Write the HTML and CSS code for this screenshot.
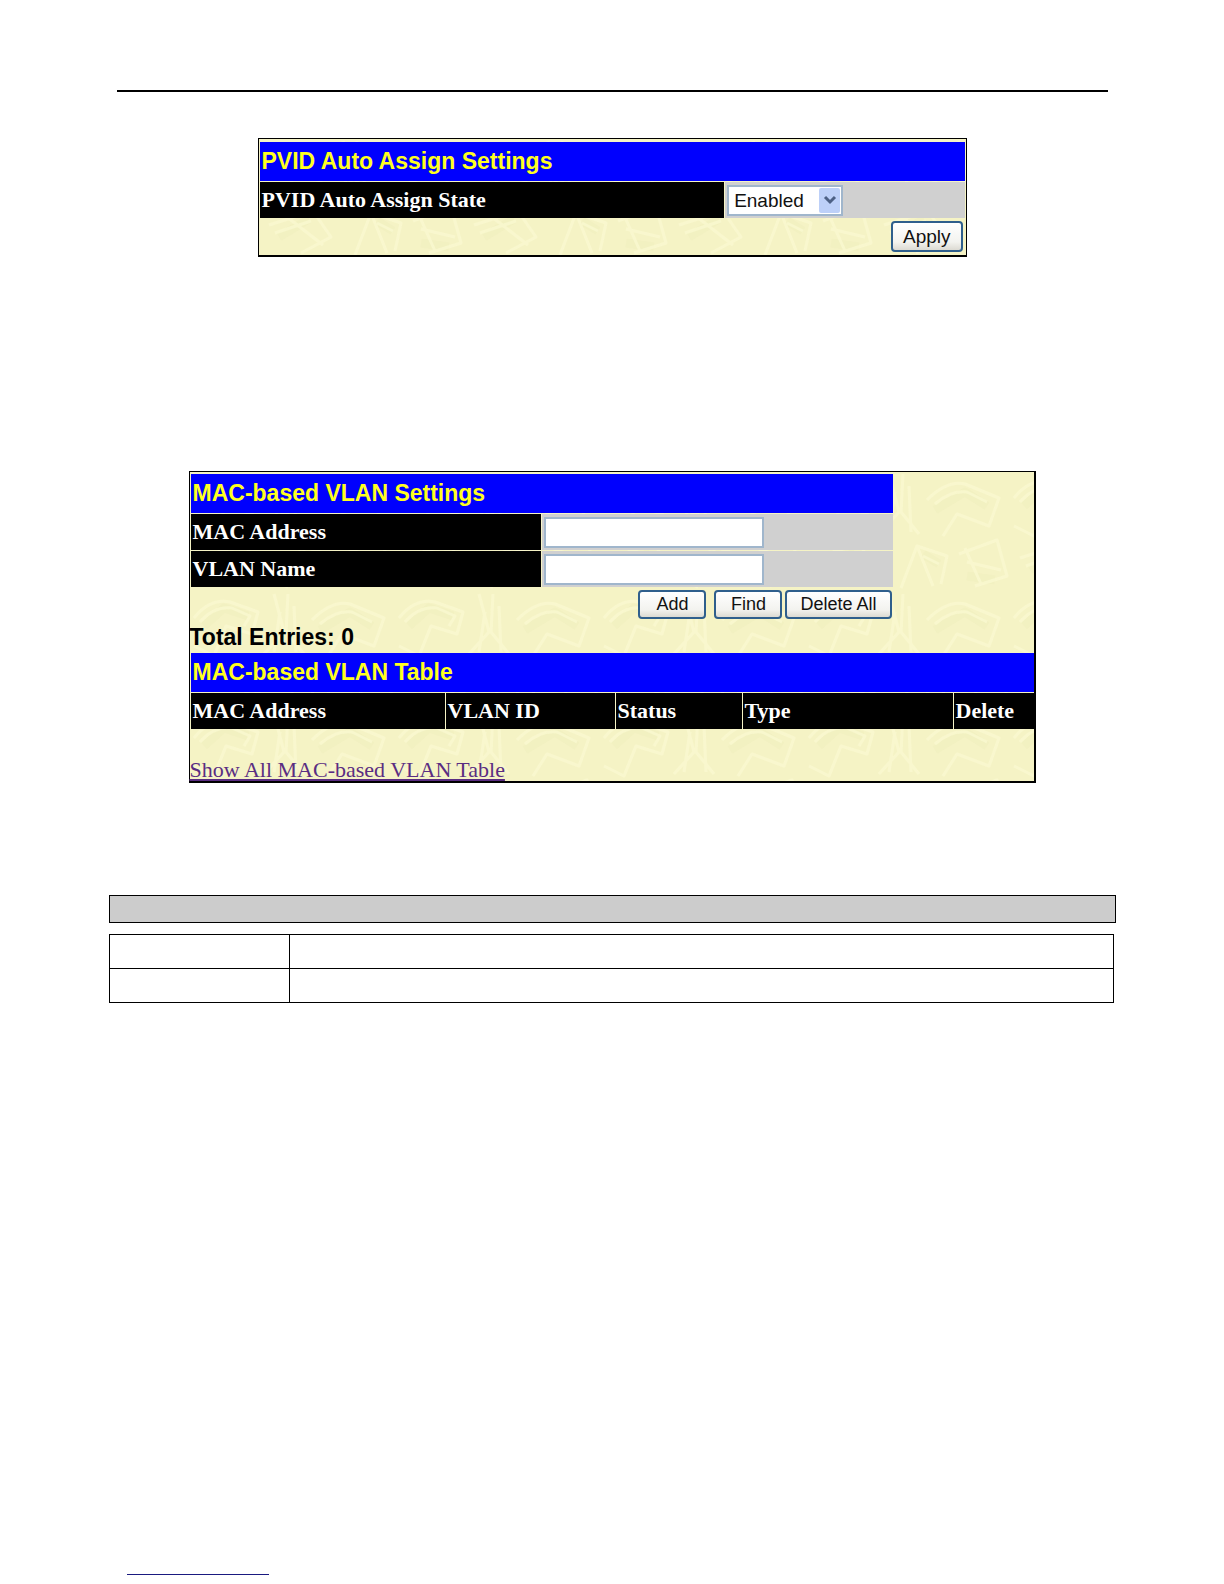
FILE: index.html
```html
<!DOCTYPE html>
<html lang="en">
<head>
    <meta charset="UTF-8">
    <meta name="viewport" content="width=device-width, initial-scale=1.0">
    <title>MAC-based VLAN Settings</title>
    <link rel="stylesheet" href="styles.css">
</head>
<body>
    <div class="page">
        <hr class="page-rule">

        <form class="panel panel-pvid">
            <svg class="texture" aria-hidden="true">
                <defs>
                    <pattern id="weave" width="205" height="120" patternUnits="userSpaceOnUse">
                        <g fill="none" stroke="#eeecbb" stroke-width="9" stroke-linejoin="round" opacity="0.4">
                            <path d="M14 34 L34 16 L58 24 M130 38 L160 20 L182 34"/>
                            <path d="M20 98 L50 80 M118 82 L134 92 M162 104 L190 108"/>
                        </g>
                        <g fill="none" stroke="#fbfad2" stroke-width="3" stroke-linejoin="round" opacity="0.7">
                            <path d="M4 26 Q20 6 40 10 L68 20 L62 42 L36 34 L24 64 L4 54"/>
                            <path d="M10 30 Q24 14 42 16 L60 24 L54 34"/>
                            <path d="M84 2 L94 40 L74 62 M98 2 L96 40 L114 62 M90 20 L84 60 M104 14 L106 60"/>
                            <path d="M122 28 Q142 8 160 12 L194 26 L184 54 L152 42 L138 64"/>
                            <path d="M130 32 Q146 18 162 20 L182 30"/>
                            <path d="M10 86 L54 72 L72 98 L42 114 M28 78 L64 106 M16 94 L52 82"/>
                            <path d="M96 116 L112 74 L142 84 L136 112 M112 74 L128 114 M118 84 L134 92"/>
                            <path d="M154 82 L192 68 L202 104 L170 114 M162 90 L196 98 M160 76 L176 112"/>
                        </g>
                    </pattern>
                </defs>
                <rect width="100%" height="100%" fill="url(#weave)"/>
            </svg>
            <table class="settings">
                <colgroup>
                    <col class="col-pvid">
                    <col>
                </colgroup>
                <tr>
                    <th class="title" colspan="2">PVID Auto Assign Settings</th>
                </tr>
                <tr>
                    <th class="name"><label for="pvidState">PVID Auto Assign State</label></th>
                    <td class="value">
                        <div class="select-box">
                            <select id="pvidState" name="pvidState">
                                <option selected>Enabled</option>
                                <option>Disabled</option>
                            </select>
                            <span class="arrow">
                                <svg width="14" height="10" viewBox="0 0 14 10" aria-hidden="true">
                                    <path d="M2 2 L7 7 L12 2" fill="none" stroke="#4d6185" stroke-width="3"/>
                                </svg>
                            </span>
                        </div>
                    </td>
                </tr>
            </table>
            <div class="actions">
                <button class="btn" type="button">Apply</button>
            </div>
        </form>

        <form class="panel panel-mac">
            <svg class="texture" aria-hidden="true">
                <rect width="100%" height="100%" fill="url(#weave)"/>
            </svg>
            <div class="mac-settings">
                <table class="settings">
                    <colgroup>
                        <col class="col-half">
                        <col>
                    </colgroup>
                    <tr>
                        <th class="title" colspan="2">MAC-based VLAN Settings</th>
                    </tr>
                    <tr>
                        <th class="name"><label for="macAddress">MAC Address</label></th>
                        <td class="value"><input type="text" id="macAddress" name="macAddress"></td>
                    </tr>
                    <tr>
                        <th class="name"><label for="vlanName">VLAN Name</label></th>
                        <td class="value"><input type="text" id="vlanName" name="vlanName"></td>
                    </tr>
                </table>
                <div class="actions">
                    <button class="btn btn-add" type="button">Add</button>
                    <button class="btn" type="button">Find</button>
                    <button class="btn" type="button">Delete All</button>
                </div>
            </div>
            <p class="total">Total Entries: 0</p>
            <table class="settings entries">
                <colgroup>
                    <col class="col-mac">
                    <col class="col-vid">
                    <col class="col-status">
                    <col class="col-type">
                    <col>
                </colgroup>
                <tr>
                    <th class="title" colspan="5">MAC-based VLAN Table</th>
                </tr>
                <tr>
                    <th class="name">MAC Address</th>
                    <th class="name">VLAN ID</th>
                    <th class="name">Status</th>
                    <th class="name">Type</th>
                    <th class="name">Delete</th>
                </tr>
            </table>
            <a class="show-all" href="#">Show All MAC-based VLAN Table</a>
        </form>

        <div class="param-head"></div>
        <table class="params">
            <tr><td class="param"></td><td></td></tr>
            <tr><td class="param"></td><td></td></tr>
        </table>

        <div class="footer-line"></div>
    </div>
</body>
</html>
```

FILE: styles.css
```css
* {
    box-sizing: border-box;
}
body {
    margin: 0;
    background-color: #fff;
    color: #000;
    font-family: "Liberation Sans", Arial, sans-serif;
}
.page {
    max-width: 1007px;
    margin: 0 auto;
    padding-top: 90px;
}
.page-rule {
    height: 2px;
    margin: 0 8px 46px;
    border: none;
    background-color: #000;
}

/* panels */
.panel {
    position: relative;
    margin: 0 auto;
    padding-top: 1px;
    border: 1px solid #000;
    border-bottom-width: 2px;
    background-color: #f5f3c5;
}
.panel-pvid {
    max-width: 709px;
    margin-bottom: 214px;
    padding-top: 2px;
}
.panel-mac {
    max-width: 847px;
    margin-bottom: 112px;
    border-right-width: 2px;
}
.texture {
    position: absolute;
    top: 0;
    left: 0;
    width: 100%;
    height: 100%;
}
.panel > :not(.texture) {
    position: relative;
}
.mac-settings {
    max-width: 704px;
}

/* settings tables */
.settings {
    width: 100%;
    table-layout: fixed;
    border-spacing: 1px;
}
.entries {
    width: calc(100% + 1px);
}
.col-pvid {
    width: 66%;
}
.col-half {
    width: 50%;
}
.col-mac {
    width: 254px;
}
.col-vid {
    width: 169px;
}
.col-status {
    width: 126px;
}
.col-type {
    width: 210px;
}
.title, .name, .value {
    height: 36px;
    padding: 0 2px;
    text-align: left;
}
.title {
    height: 39px;
    background-color: #0000fe;
    color: #ffff20;
    font-size: 23px;
}
.name {
    background-color: #000;
    color: #fff;
    font-family: "Liberation Serif", "Times New Roman", serif;
    font-size: 22px;
}
.value {
    background-color: #d0d0d0;
}

/* controls */
input, select, .btn {
    display: block;
    font-family: inherit;
    font-size: 19px;
    color: #111;
}
input, select {
    height: 31px;
    border: 2px solid #a0b6cc;
    border-radius: 0;
    background-color: #fff;
}
input {
    width: 220px;
}
.select-box {
    position: relative;
    width: 116px;
}
select {
    width: 100%;
    padding: 0 5px;
    appearance: none;
}
.arrow {
    position: absolute;
    top: 3px;
    right: 3px;
    display: flex;
    align-items: center;
    justify-content: center;
    width: 21px;
    height: 25px;
    border-radius: 2px;
    background-color: #bdd0f8;
    pointer-events: none;
}
.actions {
    display: flex;
    justify-content: flex-end;
    gap: 3px;
    padding: 2px 3px 3px;
}
.btn {
    min-width: 68px;
    height: 31px;
    padding: 0 10px;
    border: 2px solid #2f5f8c;
    border-radius: 4px;
    background: linear-gradient(#fff, #f3f3ef 70%, #dcdad2);
}
.mac-settings .actions {
    padding-right: 2px;
}
.mac-settings .btn {
    height: 29px;
    padding: 0 13px;
    font-size: 18px;
}
.btn-add {
    margin-right: 5px;
}

.total {
    margin: 0;
    font-size: 23px;
    font-weight: bold;
    line-height: 30px;
}
.show-all {
    display: block;
    margin-top: 29px;
    color: #5a2d82;
    font-family: "Liberation Serif", "Times New Roman", serif;
    font-size: 22px;
    line-height: 22px;
}

/* parameter table */
.param-head {
    height: 28px;
    border: 1px solid #000;
    background-color: #ccc;
}
.params {
    width: calc(100% - 2px);
    margin-top: 11px;
    border-collapse: collapse;
}
.params td {
    height: 34px;
    padding: 0;
    border: 1px solid #000;
}
.params .param {
    width: 18%;
}
.footer-line {
    width: 142px;
    margin: 571px 0 8px 18px;
    border-bottom: 1px solid #1a1a80;
}
```
